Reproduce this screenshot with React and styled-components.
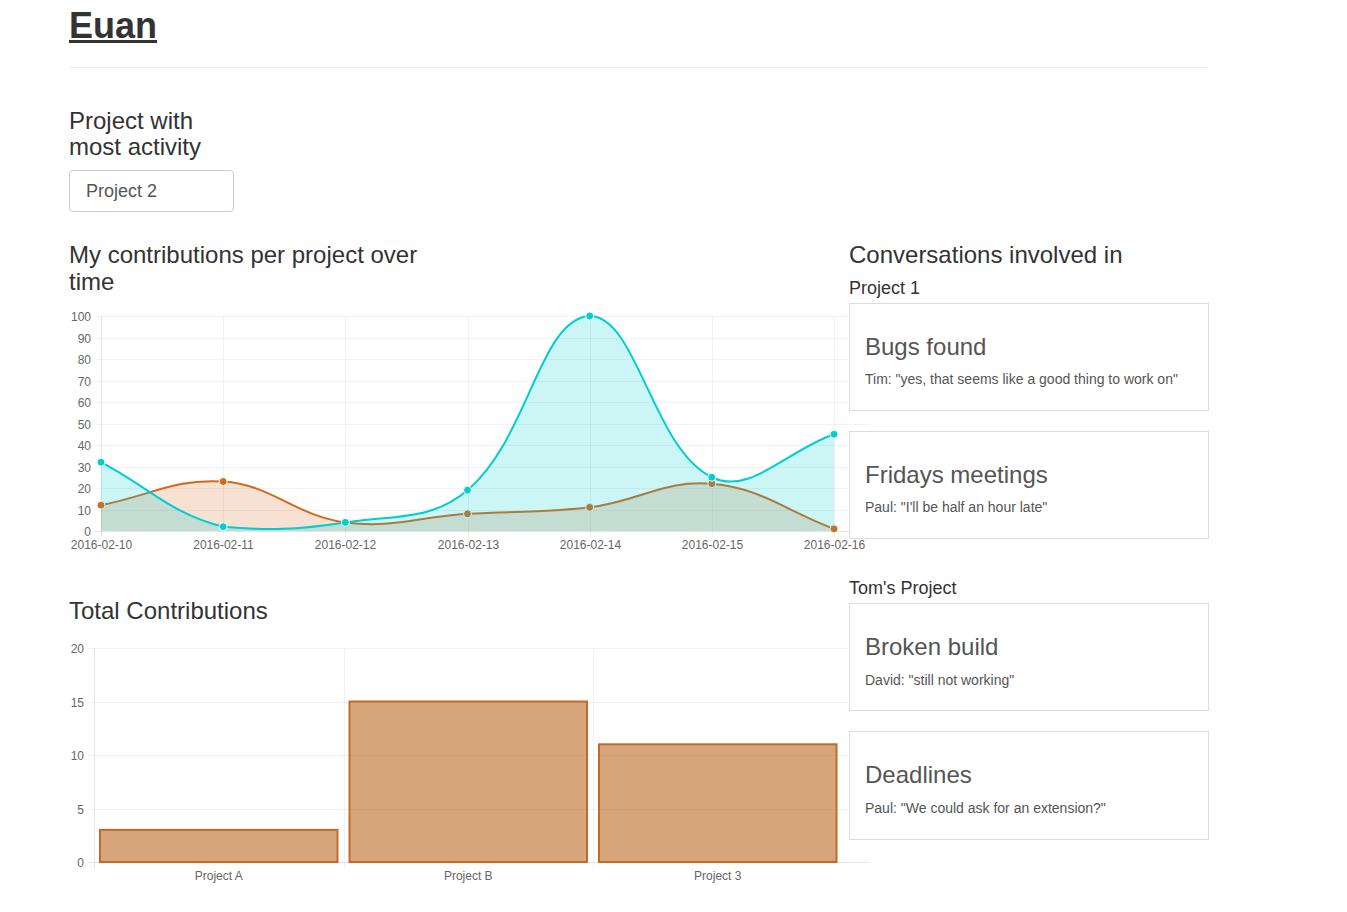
import React from "react";
import styled, { createGlobalStyle } from "styled-components";

const GlobalStyle = createGlobalStyle`
  * { box-sizing: border-box; }
  html, body { margin: 0; padding: 0; background: #fff; }
  body {
    font-family: "Liberation Sans", Arial, Helvetica, sans-serif;
    font-size: 14px;
    line-height: 1.42857;
    color: #333;
  }
`;

const ORANGE = "rgb(210,105,30)";
const ORANGE_FILL = "rgba(210,105,30,0.2)";
const CYAN = "rgb(0,206,209)";
const CYAN_FILL = "rgba(0,206,209,0.2)";
const GRID = "rgba(0,0,0,0.05)";
const AXIS = "rgba(0,0,0,0.1)";

const DAYS = ["2016-02-10", "2016-02-11", "2016-02-12", "2016-02-13", "2016-02-14", "2016-02-15", "2016-02-16"];
const SERIES = [
  { stroke: ORANGE, fill: ORANGE_FILL, values: [12, 23, 4, 8, 11, 22, 1] },
  { stroke: CYAN, fill: CYAN_FILL, values: [32, 2, 4, 19, 100, 25, 45] },
];
const TOTALS = [
  { label: "Project A", value: 3 },
  { label: "Project B", value: 15 },
  { label: "Project 3", value: 11 },
];
const CONVERSATIONS = [
  {
    project: "Project 1",
    threads: [
      { title: "Bugs found", quote: 'Tim: "yes, that seems like a good thing to work on"' },
      { title: "Fridays meetings", quote: 'Paul: "I\'ll be half an hour late"' },
    ],
  },
  {
    project: "Tom's Project",
    threads: [
      { title: "Broken build", quote: 'David: "still not working"' },
      { title: "Deadlines", quote: 'Paul: "We could ask for an extension?"' },
    ],
  },
];

// line chart geometry (svg local coords)
const L = { x0: 32, top: 11, bottom: 226, step: (834 - 101) / 6, right: 800 };
// bar chart geometry
const B = { x0: 25, top: 13, bottom: 227, slot: 249.5, right: 800, max: 20 };

const curvePath = (values) => {
  const scale = (L.bottom - L.top) / 100;
  const pts = values.map((v, i) => ({ x: L.x0 + i * L.step, y: L.bottom - v * scale }));
  const cap = (y) => Math.min(L.bottom, Math.max(L.top, y));
  const ctrl = pts.map((p, i) => {
    const prev = pts[i - 1] || p;
    const next = pts[i + 1] || p;
    const d01 = Math.hypot(p.x - prev.x, p.y - prev.y);
    const d12 = Math.hypot(next.x - p.x, next.y - p.y);
    const fa = (0.4 * d01) / (d01 + d12);
    const fb = (0.4 * d12) / (d01 + d12);
    return {
      inner: { x: p.x - fa * (next.x - prev.x), y: cap(p.y - fa * (next.y - prev.y)) },
      outer: { x: p.x + fb * (next.x - prev.x), y: cap(p.y + fb * (next.y - prev.y)) },
    };
  });
  let d = `M${pts[0].x},${pts[0].y}`;
  for (let i = 1; i < pts.length; i++) {
    const a = ctrl[i - 1].outer;
    const b = ctrl[i].inner;
    d += ` C${a.x},${a.y} ${b.x},${b.y} ${pts[i].x},${pts[i].y}`;
  }
  const area = `${d} L${pts[pts.length - 1].x},${L.bottom} L${pts[0].x},${L.bottom} Z`;
  return { d, area, pts };
};

const LineChart = () => {
  const ticks = Array.from({ length: 11 }, (_, i) => i * 10);
  const scale = (L.bottom - L.top) / 100;
  return (
    <ChartSvg width="800" height="273" $tall={273}>
      {ticks.map((t) => {
        const y = Math.round(L.bottom - t * scale) + 0.5;
        return (
          <g key={t}>
            <line x1={L.x0 - 6} x2={L.right} y1={y} y2={y} stroke={t === 0 ? AXIS : GRID} />
            <AxisText x={L.x0 - 10} y={y + 4} textAnchor="end">{t}</AxisText>
          </g>
        );
      })}
      {DAYS.map((day, i) => {
        const x = Math.round(L.x0 + i * L.step) + 0.5;
        return (
          <g key={day}>
            <line x1={x} x2={x} y1={L.top} y2={L.bottom + 6} stroke={i === 0 ? AXIS : GRID} />
            <AxisText x={x} y={L.bottom + 18} textAnchor="middle">{day}</AxisText>
          </g>
        );
      })}
      {SERIES.map((s, k) => {
        const { d, area, pts } = curvePath(s.values);
        return (
          <g key={k}>
            <path d={d} fill="none" stroke={s.stroke} strokeWidth="2" />
            <path d={area} fill={s.fill} />
            {pts.map((p, i) => (
              <circle key={i} cx={p.x} cy={p.y} r="4" fill={s.stroke} stroke="#fff" strokeWidth="1" />
            ))}
          </g>
        );
      })}
    </ChartSvg>
  );
};

const BarChart = () => {
  const ticks = [0, 5, 10, 15, 20];
  const scale = (B.bottom - B.top) / B.max;
  return (
    <ChartSvg width="800" height="260" $tall={260}>
      {ticks.map((t) => {
        const y = Math.round(B.bottom - t * scale) + 0.5;
        return (
          <g key={t}>
            <line x1={B.x0 - 6} x2={B.right} y1={y} y2={y} stroke={t === 0 ? AXIS : GRID} />
            <AxisText x={B.x0 - 10} y={y + 4} textAnchor="end">{t}</AxisText>
          </g>
        );
      })}
      {TOTALS.map((bar, i) => {
        const left = B.x0 + i * B.slot;
        const x = Math.round(left) + 0.5;
        const top = B.bottom - bar.value * scale;
        return (
          <g key={bar.label}>
            <line x1={x} x2={x} y1={B.top} y2={B.bottom + 6} stroke={i === 0 ? AXIS : GRID} />
            <rect
              x={left + 6}
              y={top}
              width={B.slot - 12}
              height={B.bottom - top}
              fill="rgba(187,105,37,0.6)"
              stroke="rgb(196,106,38)"
              strokeWidth="2"
            />
            <AxisText x={left + B.slot / 2} y={B.bottom + 18} textAnchor="middle">{bar.label}</AxisText>
          </g>
        );
      })}
    </ChartSvg>
  );
};

const App = () => (
  <>
    <GlobalStyle />
    <Page>
      <Name>
        <NameLink href="#">Euan</NameLink>
      </Name>
      <Divider />
      <Narrow $width={165}>
        <Heading $bottom={10}>Project with most activity</Heading>
        <ProjectField readOnly value="Project 2" />
      </Narrow>
      <Columns>
        <Column>
          <Narrow $width={360}>
            <Heading>My contributions per project over time</Heading>
          </Narrow>
          <LineChart />
          <Heading>Total Contributions</Heading>
          <BarChart />
        </Column>
        <Column>
          <Heading>Conversations involved in</Heading>
          {CONVERSATIONS.map((group) => (
            <Group key={group.project}>
              <ProjectName>{group.project}</ProjectName>
              {group.threads.map((t) => (
                <Card key={t.title}>
                  <CardTitle>{t.title}</CardTitle>
                  <CardText>{t.quote}</CardText>
                </Card>
              ))}
            </Group>
          ))}
        </Column>
      </Columns>
    </Page>
  </>
);

export default App;

const Page = styled.div`
  width: 1209px;
  padding: 6px 0 20px 69px;
`;

const Name = styled.h1`
  margin: 0;
  font-size: 36px;
  font-weight: 700;
  line-height: 1.1;
`;

const NameLink = styled.a`
  color: #333;
  text-decoration: underline;
`;

const Divider = styled.hr`
  margin: 21px 0 0;
  border: 0;
  border-top: 1px solid #eee;
  padding-bottom: 20px;
`;

const Narrow = styled.div`
  width: ${({ $width }) => $width}px;
`;

const Heading = styled.h3`
  margin: 20px 0 ${({ $bottom }) => ($bottom ?? 10)}px;
  font-size: 24px;
  font-weight: 400;
  line-height: 1.1;
  color: #333;
`;

const ProjectField = styled.input`
  display: block;
  width: 165px;
  height: 42px;
  margin: 0 0 10px;
  padding: 0 16px;
  font-family: "Liberation Sans", Arial, sans-serif;
  font-size: 18px;
  color: #555;
  background: #fff;
  border: 1px solid #ccc;
  border-radius: 4px;
  outline: none;
`;

const Columns = styled.div`
  display: grid;
  grid-template-columns: 750px 360px;
  column-gap: 30px;
  align-items: start;
`;

const Column = styled.div`
  min-width: 0;
`;

const ChartSvg = styled.svg`
  display: block;
  overflow: visible;
  height: ${({ $tall }) => $tall}px;
`;

const AxisText = styled.text`
  font-family: "Liberation Sans", Arial, sans-serif;
  font-size: 12px;
  fill: #666;
`;

const Group = styled.div`
  display: flow-root;
  & + & {
    margin-top: 20px;
  }
`;

const ProjectName = styled.h4`
  margin: 0 0 4px;
  font-size: 18px;
  font-weight: 400;
  line-height: 1.1;
  color: #333;
`;

const Card = styled.div`
  background: #fff;
  border: 1px solid #ddd;
  padding: 10px 15px;
  margin-bottom: 20px;
`;

const CardTitle = styled.h3`
  margin: 20px 0 10px;
  font-size: 24px;
  font-weight: 400;
  line-height: 1.1;
  color: #555;
`;

const CardText = styled.p`
  margin: 0 0 10px;
  color: #555;
`;
